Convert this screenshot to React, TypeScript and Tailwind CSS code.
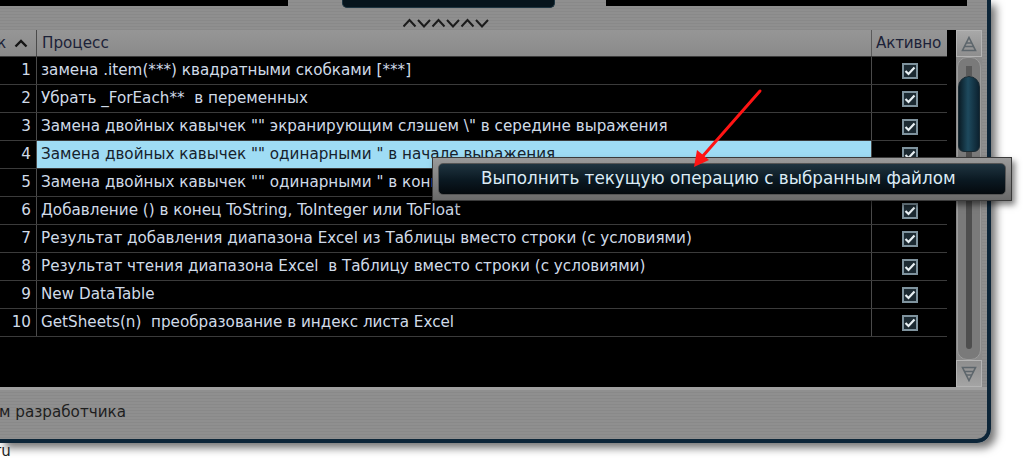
import React from "react";

const rows: string[] = [
  "замена .item(***) квадратными скобками [***]",
  "Убрать _ForEach**  в переменных",
  "Замена двойных кавычек \"\" экранирующим слэшем \\\" в середине выражения",
  "Замена двойных кавычек \"\" одинарными \" в начале выражения",
  "Замена двойных кавычек \"\" одинарными \" в конце выражения",
  "Добавление () в конец ToString, ToInteger или ToFloat",
  "Результат добавления диапазона Excel из Таблицы вместо строки (с условиями)",
  "Результат чтения диапазона Excel  в Таблицу вместо строки (с условиями)",
  "New DataTable",
  "GetSheets(n)  преобразование в индекс листа Excel",
];

function Check() {
  return (
    <div className="w-[16px] h-[16px] border-[2px] border-[#7f939e] bg-[#1c2a32] flex items-center justify-center">
      <svg width="12" height="12" viewBox="0 0 12 12">
        <path d="M1.5 6 L4.5 9 L10.5 2.5" fill="none" stroke="#e8f0f4" strokeWidth="2.2" />
      </svg>
    </div>
  );
}

function TriUp() {
  return (
    <svg width="16" height="16" viewBox="0 0 16 16">
      <path d="M8 1.5 L14.5 14.5 L1.5 14.5 Z" fill="none" stroke="#5d666c" strokeWidth="1.6" />
      <path d="M5.2 7 H10.8 M3.6 10.5 H12.4" stroke="#5d666c" strokeWidth="1.6" />
    </svg>
  );
}

function TriDown() {
  return (
    <svg width="16" height="16" viewBox="0 0 16 16">
      <path d="M8 14.5 L14.5 1.5 L1.5 1.5 Z" fill="none" stroke="#5d666c" strokeWidth="1.6" />
      <path d="M5.2 9 H10.8 M3.6 5.5 H12.4" stroke="#5d666c" strokeWidth="1.6" />
    </svg>
  );
}

export default function App() {
  const chevrons = [0, 1, 2, 3, 4, 5];
  return (
    <div className="w-[1023px] h-[460px] bg-white relative overflow-hidden font-['DejaVu_Sans',sans-serif]">
      {/* window */}
      <div className="w-[991px] h-[443px] flex flex-col bg-[repeating-linear-gradient(180deg,#8f8f8f_0px,#8f8f8f_2px,#898989_2px,#898989_3px)] rounded-br-[14px] border-r-[4px] border-b-[4px] border-[#0c2538] shadow-[5px_5px_9px_rgba(0,0,0,0.55)]">
        {/* top strip */}
        <div className="h-[30px] flex flex-col">
          <div className="flex items-start h-[8px]">
            <div className="w-[288px] h-[6px] bg-black" />
            <div className="ml-[54px] w-[213px] h-[8px] bg-[#06141c] rounded-b-[5px] border-b border-x border-[#1d3440]" />
            <div className="ml-[51px] w-[361px] h-[6px] bg-black" />
          </div>
          <div className="pl-[403px] pt-[10px]">
            <svg width="87" height="10" viewBox="0 0 87 10">
              {chevrons.map((c) => {
                const x = c * 14.5;
                const up = c % 2 === 0;
                const pts = up
                  ? `${x + 0.5},8.5 ${x + 6.5},2 ${x + 12.5},8.5`
                  : `${x + 0.5},2 ${x + 6.5},8.5 ${x + 12.5},2`;
                return <polyline key={c} points={pts} fill="none" stroke="#1b1b1b" strokeWidth="2" />;
              })}
            </svg>
          </div>
        </div>

        {/* main */}
        <div className="h-[357px] flex">
          {/* grid */}
          <div className="w-[947px] flex flex-col bg-black">
            {/* header */}
            <div className="h-[27px] flex bg-[linear-gradient(180deg,#969696,#8a8a8a)] border-b border-[#3a3a3a] text-[15.2px] text-[#1c2238]">
              <div className="w-[37px] flex items-center border-r border-[#4a4a4a] overflow-hidden">
                <span className="-ml-[3px]">к</span>
                <svg className="ml-[8px]" width="14" height="10" viewBox="0 0 14 10">
                  <polyline points="1.5,8.5 7,3 12.5,8.5" fill="none" stroke="#151515" strokeWidth="2.4" />
                </svg>
              </div>
              <div className="w-[835px] flex items-center pl-[5px] border-r border-[#5a5a5a]">Процесс</div>
              <div className="flex-1 flex items-center pl-[4px] tracking-[-0.2px]">Активно</div>
            </div>
            {/* rows */}
            {rows.map((t, i) => {
              const sel = i === 3;
              return (
                <div key={i} className="h-[28px] flex border-b border-[#3b3b3b] text-[15.2px] text-[#d0dbe8]">
                  <div className="w-[37px] flex items-center justify-end pr-[5px] border-r border-[#4a4a4a]">{i + 1}</div>
                  <div className={`w-[835px] flex items-center pl-[4px] whitespace-pre border-r border-[#4a4a4a] overflow-hidden ${sel ? "bg-[#9fdcf4] text-[#16222c]" : ""}`}>{t}</div>
                  <div className="flex-1 flex items-center justify-center">
                    <Check />
                  </div>
                </div>
              );
            })}
          </div>
          {/* black bar */}
          <div className="w-[9px] bg-black" />
          {/* scrollbar */}
          <div className="w-[26px] flex flex-col bg-[#8a8a8a]">
            <div className="h-[27px] flex items-center justify-center bg-[linear-gradient(180deg,#a8a8a8,#8e8e8e)] border border-[#b4b4b4]">
              <TriUp />
            </div>
            <div className="flex-1 flex flex-col items-center mx-[1px] rounded-t-[10px] rounded-b-[10px] bg-[#7a7a7a] border border-[#9c9c9c] pt-[8px] pb-[10px]">
              <div className="w-[6px] h-[10px] bg-[#5a5a5a]" />
              <div className="w-[22px] h-[76px] rounded-t-[11px] rounded-b-[6px] bg-[linear-gradient(90deg,#0a1c26,#1e4a5e_45%,#0c2230)] border border-[#1b2b33]" />
              <div className="w-[6px] flex-1 bg-[#4e4e4e] rounded-b-[3px]" />
            </div>
            <div className="h-[27px] flex items-center justify-center bg-[linear-gradient(180deg,#8e8e8e,#a4a4a4)] border border-[#b4b4b4]">
              <TriDown />
            </div>
          </div>
        </div>

        {/* bottom panel */}
        <div className="flex-1 flex items-center border-t-[3px] border-[#a0a0a0] text-[15.2px] text-[#1e1e1e]">
          <span className="-ml-[1px] -mt-[4px]">м разработчика</span>
        </div>
      </div>
      <div className="text-[15px] text-[#222] leading-[16px] -ml-[5px]">ru</div>

      {/* context menu */}
      <div className="absolute left-[432px] top-[157px] w-[580px] h-[44px] p-[5px] bg-[linear-gradient(180deg,#9a9a9a,#6a6a6a)] border border-[#3a3a3a] shadow-[3px_4px_6px_rgba(0,0,0,0.5)]">
        <div className="h-full rounded-[5px] border border-[#555] bg-[linear-gradient(180deg,#1f3440,#0a1821_55%,#04090d)] flex items-center pl-[42px] text-[16.8px] text-[#dcecf6]">
          Выполнить текущую операцию с выбранным файлом
        </div>
      </div>

      {/* red arrow */}
      <svg className="absolute left-0 top-0" width="1023" height="460" viewBox="0 0 1023 460">
        <line x1="760" y1="91" x2="702" y2="157" stroke="#ff1414" strokeWidth="3" strokeLinecap="round" />
        <path d="M694 167 L697 150 L709 160 Z" fill="#ff1414" />
      </svg>
    </div>
  );
}
